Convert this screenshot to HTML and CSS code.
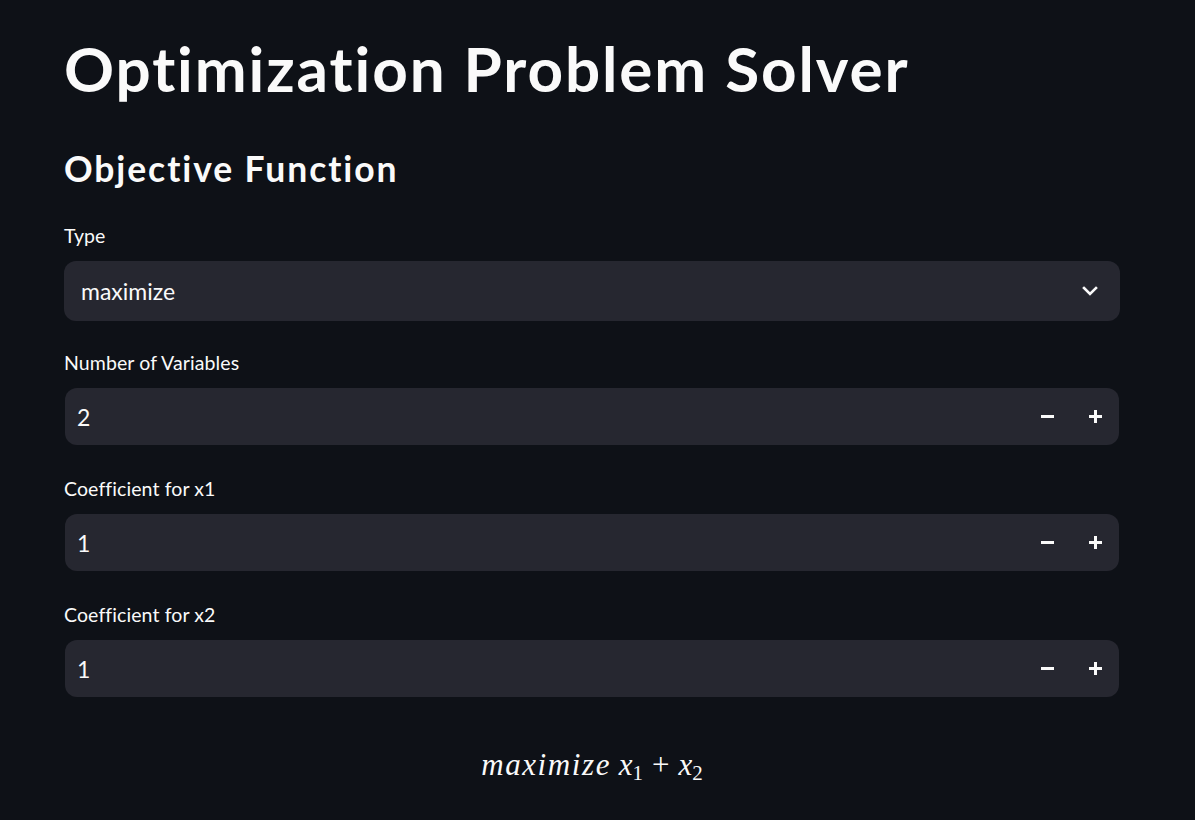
FILE: index.html
```html
<!DOCTYPE html>
<html lang="en">
<head>
<meta charset="utf-8">
<title>Optimization Problem Solver</title>
<link rel="stylesheet" href="styles.css">
</head>
<body>
<main class="main">
  <h1 class="title">Optimization Problem Solver</h1>
  <h3 class="subheader">Objective Function</h3>
  <div class="widgets">
    <div class="widget widget-select">
      <label class="label">Type</label>
      <div class="select">
        <span class="select-value">maximize</span>
        <svg class="chevron" width="16" height="10" viewBox="0 0 16 10"><polyline points="2,2 8,8 14,2" fill="none" stroke="#fafafa" stroke-width="2.6" stroke-linecap="square"/></svg>
      </div>
    </div>
    <div class="widget widget-number">
      <label class="label">Number of Variables</label>
      <div class="number">
        <div class="number-field">2</div>
        <div class="step"><span class="minus"></span></div>
        <div class="step"><span class="plus"></span></div>
      </div>
    </div>
    <div class="widget widget-number">
      <label class="label">Coefficient for x1</label>
      <div class="number">
        <div class="number-field">1</div>
        <div class="step"><span class="minus"></span></div>
        <div class="step"><span class="plus"></span></div>
      </div>
    </div>
    <div class="widget widget-number">
      <label class="label">Coefficient for x2</label>
      <div class="number">
        <div class="number-field">1</div>
        <div class="step"><span class="minus"></span></div>
        <div class="step"><span class="plus"></span></div>
      </div>
    </div>
  </div>
  <div class="math"><span class="mi word">maximize</span> <span class="mi">x</span><sub class="sub">1</sub><span class="op">+</span><span class="mi">x</span><sub class="sub">2</sub></div>
</main>
</body>
</html>
```

FILE: styles.css
```css
html, body {
  margin: 0;
  padding: 0;
  background: #0e1117;
  color: #fafafa;
  font-family: Lato, "Noto Sans", sans-serif;
}
.main {
  width: 1056px;
  padding: 28px 75px 0 64px;
  box-sizing: content-box;
}
.title {
  margin: 0;
  font-size: 62px;
  line-height: 80px;
  font-weight: 700;
  letter-spacing: 1.9px;
  color: #fafafa;
}
.subheader {
  margin: 37px 0 0 0;
  font-size: 35.5px;
  line-height: 48px;
  font-weight: 700;
  letter-spacing: 1.9px;
}
.widgets {
  display: flex;
  flex-direction: column;
  gap: 28px;
  margin-top: 28px;
}
.widget {
  display: flex;
  flex-direction: column;
  gap: 9px;
}
.widget-select {
  gap: 10px;
  margin-bottom: -1px;
}
.label {
  font-size: 19.5px;
  line-height: 30px;
  font-weight: 400;
  letter-spacing: 0.1px;
}
.select {
  height: 60px;
  background: #262730;
  border-radius: 12px;
  display: flex;
  align-items: center;
  justify-content: space-between;
  padding: 0 22px 0 17px;
}
.select-value {
  font-size: 23px;
}
.chevron {
  display: block;
}
.number {
  height: 57px;
  border: 1px solid transparent;
  display: flex;
}
.number-field {
  flex: 1;
  background: #262730;
  border-radius: 12px 0 0 12px;
  display: flex;
  align-items: center;
  padding-left: 12px;
  font-size: 23px;
}
.step {
  width: 48px;
  background: #262730;
  display: flex;
  align-items: center;
  justify-content: center;
}
.step:last-child {
  border-radius: 0 12px 12px 0;
}
.minus, .plus {
  position: relative;
  width: 13px;
  height: 13px;
  display: block;
}
.minus::before, .plus::before, .plus::after {
  content: "";
  position: absolute;
  background: #fafafa;
}
.minus::before, .plus::before {
  left: 0;
  top: 5px;
  width: 13px;
  height: 3px;
}
.plus::after {
  left: 5px;
  top: 0;
  width: 3px;
  height: 13px;
}
.math {
  margin-top: 47px;
  text-align: center;
  font-family: "Liberation Serif", "DejaVu Serif", serif;
  font-size: 31px;
  line-height: 40px;
}
.mi {
  font-style: italic;
}
.word {
  letter-spacing: 1.6px;
}
.sub {
  font-size: 21px;
  font-style: normal;
  vertical-align: -5px;
  line-height: 0;
}
.op {
  margin: 0 9px;
}
```
